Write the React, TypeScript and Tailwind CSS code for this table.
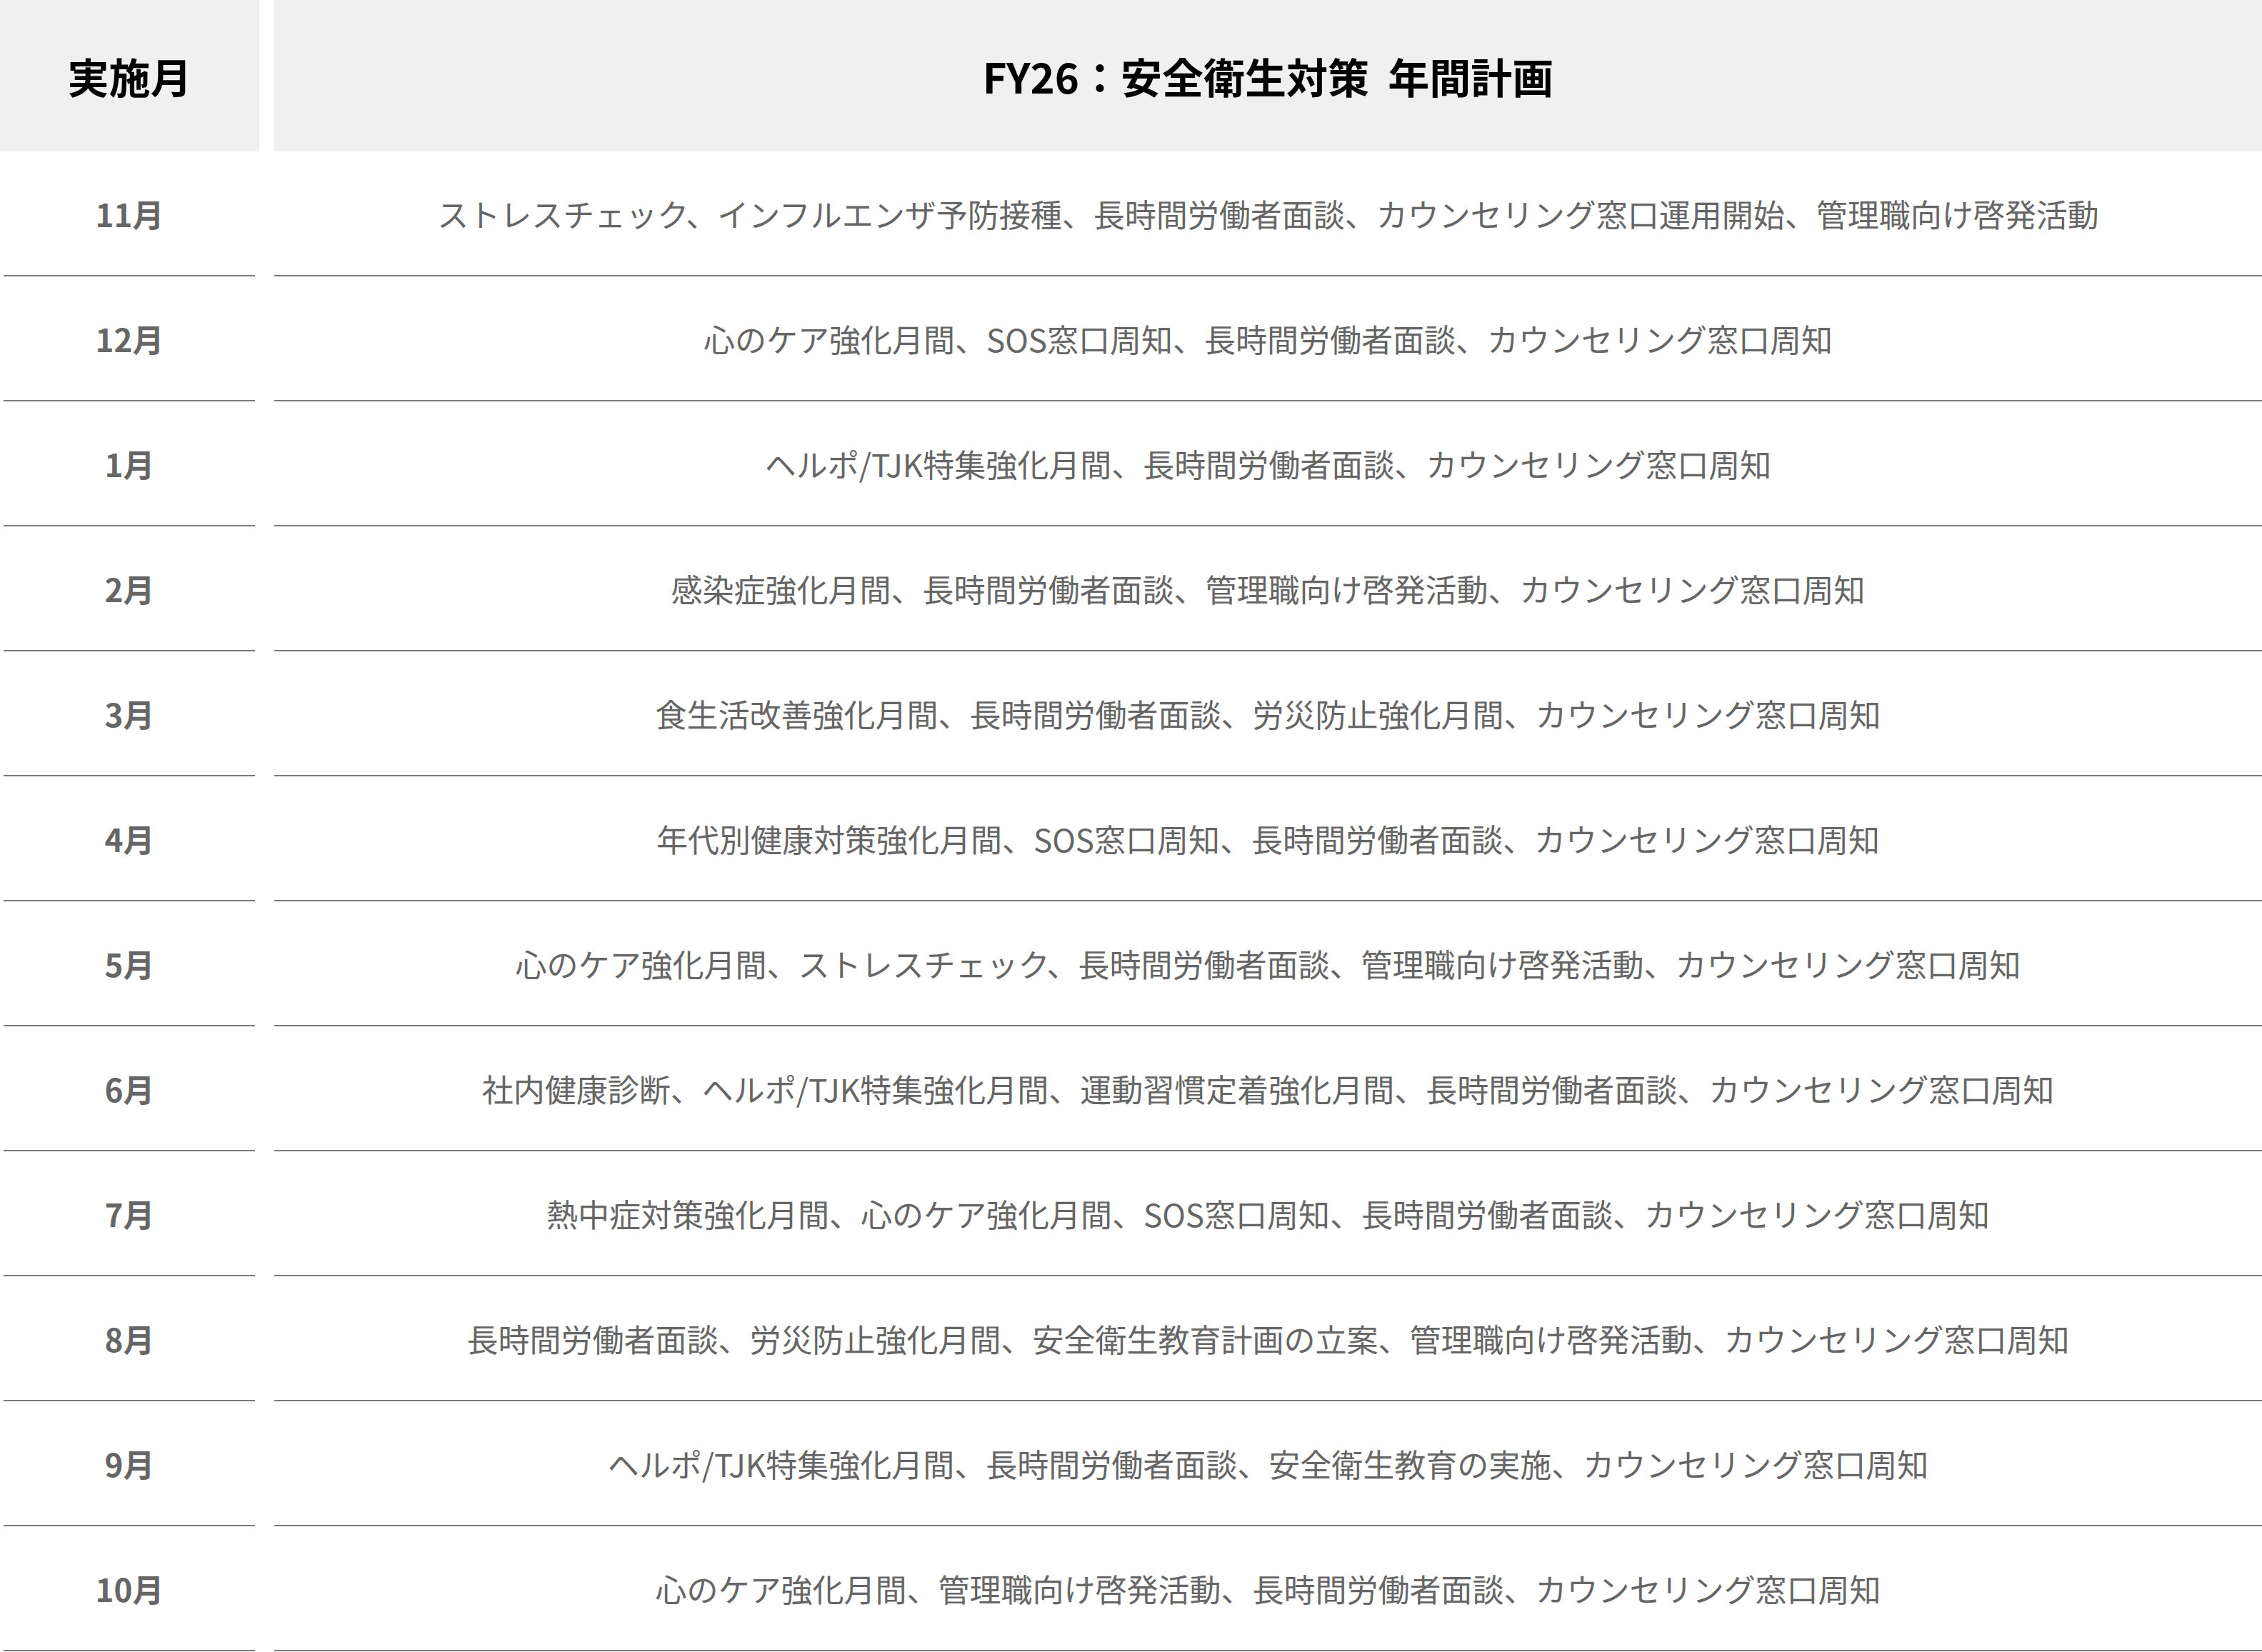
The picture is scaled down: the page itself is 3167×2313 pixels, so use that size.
const rows: { month: string; plan: string }[] = [
  { month: "11月", plan: "ストレスチェック、インフルエンザ予防接種、長時間労働者面談、カウンセリング窓口運用開始、管理職向け啓発活動" },
  { month: "12月", plan: "心のケア強化月間、SOS窓口周知、長時間労働者面談、カウンセリング窓口周知" },
  { month: "1月", plan: "ヘルポ/TJK特集強化月間、長時間労働者面談、カウンセリング窓口周知" },
  { month: "2月", plan: "感染症強化月間、長時間労働者面談、管理職向け啓発活動、カウンセリング窓口周知" },
  { month: "3月", plan: "食生活改善強化月間、長時間労働者面談、労災防止強化月間、カウンセリング窓口周知" },
  { month: "4月", plan: "年代別健康対策強化月間、SOS窓口周知、長時間労働者面談、カウンセリング窓口周知" },
  { month: "5月", plan: "心のケア強化月間、ストレスチェック、長時間労働者面談、管理職向け啓発活動、カウンセリング窓口周知" },
  { month: "6月", plan: "社内健康診断、ヘルポ/TJK特集強化月間、運動習慣定着強化月間、長時間労働者面談、カウンセリング窓口周知" },
  { month: "7月", plan: "熱中症対策強化月間、心のケア強化月間、SOS窓口周知、長時間労働者面談、カウンセリング窓口周知" },
  { month: "8月", plan: "長時間労働者面談、労災防止強化月間、安全衛生教育計画の立案、管理職向け啓発活動、カウンセリング窓口周知" },
  { month: "9月", plan: "ヘルポ/TJK特集強化月間、長時間労働者面談、安全衛生教育の実施、カウンセリング窓口周知" },
  { month: "10月", plan: "心のケア強化月間、管理職向け啓発活動、長時間労働者面談、カウンセリング窓口周知" },
];

export default function App() {
  return (
    <div className="w-full bg-white font-['Noto_Sans_CJK_JP',sans-serif]">
      <div className="grid grid-cols-[363px_1fr] gap-x-[21px]">
        {/* header */}
        <div className="h-[212px] bg-[#f0f0f0] flex items-center justify-center text-[58px] font-bold text-black">
          実施月
        </div>
        <div className="h-[212px] bg-[#f0f0f0] flex items-center justify-center text-[58px] font-bold text-black">
          FY26：安全衛生対策&nbsp;&nbsp;年間計画
        </div>

        {rows.map(r => (
          <div key={r.month} className="contents">
            <div className="h-[175px] flex flex-col">
              <div className="flex-1 flex items-center justify-center text-[44px] font-bold text-[#666]">
                {r.month}
              </div>
              <div className="h-[2px] ml-[5px] mr-[6px] bg-[#7a7a7a]" />
            </div>
            <div className="h-[175px] flex flex-col">
              <div className="flex-1 flex items-center justify-center text-[44px] text-[#666] whitespace-nowrap">
                {r.plan}
              </div>
              <div className="h-[2px] bg-[#7a7a7a]" />
            </div>
          </div>
        ))}
      </div>
    </div>
  );
}
